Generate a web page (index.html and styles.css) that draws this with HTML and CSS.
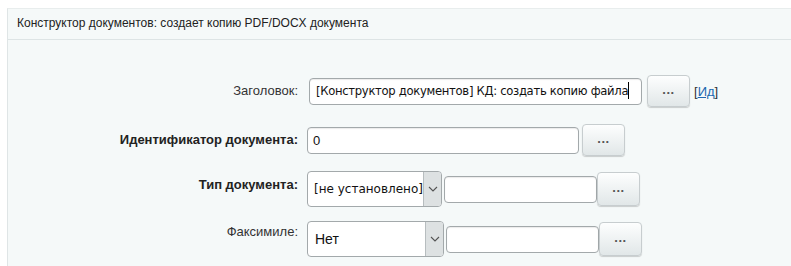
FILE: index.html
```
<!DOCTYPE html>
<html lang="ru">
<head>
    <meta charset="UTF-8">
    <title>Конструктор документов</title>
    <link rel="stylesheet" href="styles.css">
</head>
<body>
    <div class="panel">
        <div class="panel-title">Конструктор документов: создает копию PDF/DOCX документа</div>

        <div class="form">
            <div class="row row-title">
                <div class="label">Заголовок:</div>
                <div class="field">
                    <div class="input input-title">[Конструктор документов] КД: создать копию файла<span class="caret"></span></div>
                    <button class="btn btn-title">...</button>
                    <span class="id-link">[<a href="#">Ид</a>]</span>
                </div>
            </div>

            <div class="row row-id">
                <div class="label bold">Идентификатор документа:</div>
                <div class="field">
                    <div class="input input-id">0</div>
                    <button class="btn">...</button>
                </div>
            </div>

            <div class="row row-type">
                <div class="label bold">Тип документа:</div>
                <div class="field">
                    <div class="select select-type">
                        <span class="select-value">[не установлено]</span>
                        <span class="select-arrow"><svg width="10" height="6" viewBox="0 0 10 6"><path d="M1 1l4 4 4-4" fill="none" stroke="#555" stroke-width="1.1"/></svg></span>
                    </div>
                    <div class="input input-small"></div>
                    <button class="btn">...</button>
                </div>
            </div>

            <div class="row row-fax">
                <div class="label">Факсимиле:</div>
                <div class="field">
                    <div class="select select-fax">
                        <span class="select-value">Нет</span>
                        <span class="select-arrow"><svg width="10" height="6" viewBox="0 0 10 6"><path d="M1 1l4 4 4-4" fill="none" stroke="#555" stroke-width="1.1"/></svg></span>
                    </div>
                    <div class="input input-small"></div>
                    <button class="btn">...</button>
                </div>
            </div>
        </div>
    </div>
</body>
</html>
```

FILE: styles.css
```
body {
    margin: 0;
    padding: 8px 0 0 7px;
    background: #fff;
    font-family: "Liberation Sans", Arial, sans-serif;
    color: #333;
    overflow: hidden;
}
.panel {
    background: #f5f9f9;
    border-left: 1px solid #dfe5e6;
    border-top: 1px solid #e8eded;
    height: 258px;
}
.panel-title {
    height: 30px;
    line-height: 29px;
    padding-left: 9px;
    font-size: 12px;
    color: #222;
    border-bottom: 1px solid #dde4e5;
}
.form {
    padding-top: 35px;
}
.row {
    display: flex;
    align-items: flex-start;
}
.label {
    width: 290px;
    text-align: right;
    font-size: 13px;
    color: #333;
    padding-top: 8px;
}
.label.bold {
    font-weight: bold;
    color: #222;
}
.field {
    display: flex;
    align-items: center;
    margin-left: 9px;
}
.input {
    box-sizing: border-box;
    height: 27px;
    background: #fff;
    border: 1px solid #a3a9ab;
    border-radius: 4px;
    box-shadow: inset 0 1px 1px rgba(0,0,0,0.08);
    font-family: "DejaVu Sans", Tahoma, sans-serif;
    font-size: 12px;
    color: #111;
    line-height: 25px;
    padding-left: 6px;
    white-space: nowrap;
    overflow: hidden;
}
.input-title {
    width: 333px;
    margin-left: 2px;
    font-size: 11.6px;
    letter-spacing: -0.3px;
}
.caret {
    display: inline-block;
    width: 1px;
    height: 17px;
    background: #000;
    vertical-align: -4px;
}
.input-id {
    width: 272px;
    font-family: "Liberation Sans", Arial, sans-serif;
    font-size: 13px;
    padding-left: 5px;
}
.input-small {
    width: 153px;
    margin-left: 2px;
}
.btn {
    box-sizing: border-box;
    width: 43px;
    height: 32px;
    margin-left: 3px;
    border: 1px solid #c7cdcf;
    border-radius: 4px;
    background: linear-gradient(#fdfefe, #e1e7e8);
    box-shadow: 0 1px 1px rgba(0,0,0,0.18);
    font-family: "Liberation Sans", Arial, sans-serif;
    font-size: 13px;
    font-weight: bold;
    color: #555;
    padding: 0 0 3px;
    letter-spacing: 0.5px;
}
.btn-title {
    margin-left: 5px;
}
.id-link {
    margin-left: 4px;
    font-size: 13px;
    color: #333;
}
.id-link a {
    color: #2067b0;
}
.row-id {
    margin-top: 17px;
}
.row-type {
    margin-top: 15px;
}
.row-type .label {
    padding-top: 6px;
}
.select {
    box-sizing: border-box;
    display: flex;
    height: 36px;
    background: #fff;
    border: 1px solid #a3a9ab;
    border-radius: 4px;
    overflow: hidden;
    font-size: 13px;
    color: #111;
}
.select-type {
    width: 135px;
}
.select-fax {
    width: 137px;
}
.select-value {
    flex: 1;
    line-height: 34px;
    padding-left: 6px;
    white-space: nowrap;
    overflow: hidden;
}
.select-type .select-value {
    font-family: "DejaVu Sans", Tahoma, sans-serif;
    font-size: 12px;
}
.select-fax .select-value {
    font-size: 14px;
    padding-left: 7px;
}
.select-arrow {
    width: 17px;
    border-left: 1px solid #b7bdbf;
    background: #dde1e2;
    display: flex;
    align-items: center;
    justify-content: center;
}
.row-type .btn, .row-fax .btn {
    margin-left: 0;
    height: 34px;
}
.row-fax {
    margin-top: 14px;
}
.row-fax .label {
    padding-top: 3px;
}
```
